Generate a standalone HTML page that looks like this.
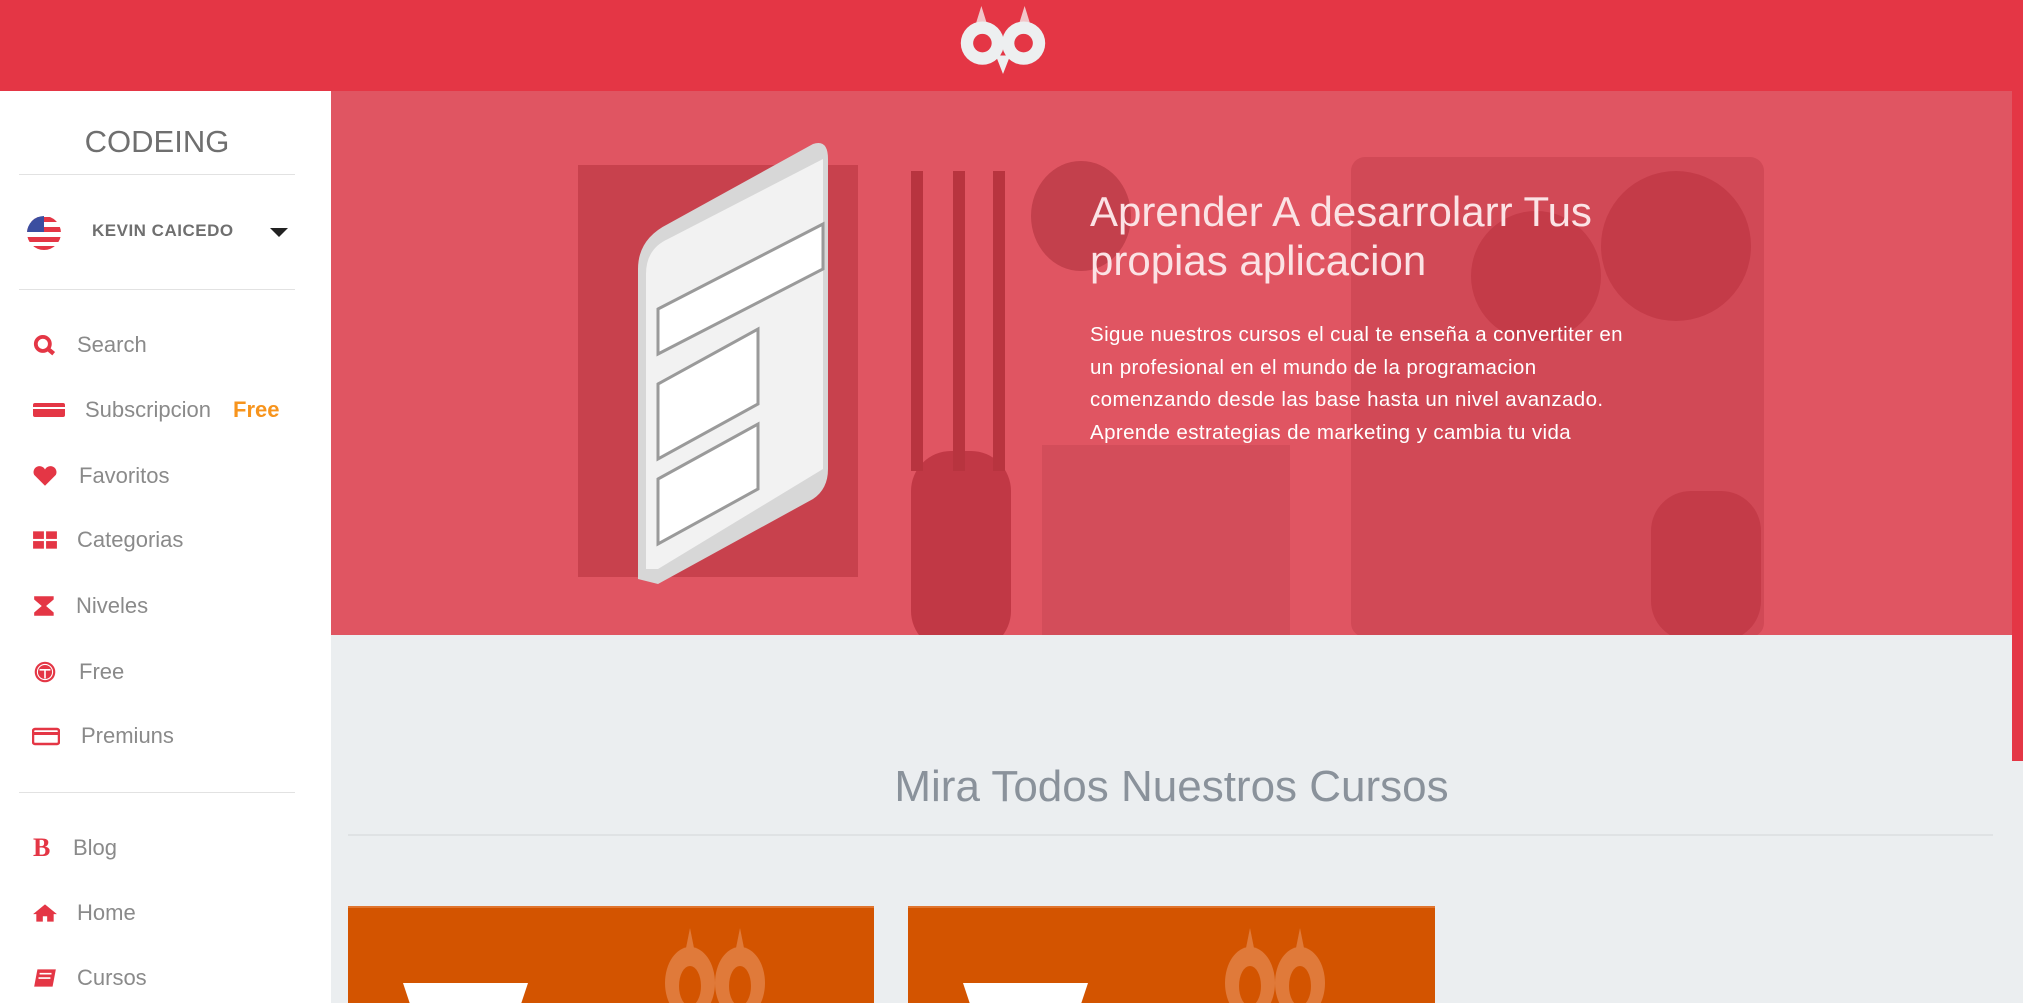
<!DOCTYPE html>
<html><head><meta charset="utf-8"><style>
*{margin:0;padding:0;box-sizing:border-box}
body{width:2023px;height:1003px;overflow:hidden;background:#ebeef0;font-family:"Liberation Sans",sans-serif;position:relative}
.top{position:absolute;left:0;top:0;width:2023px;height:91px;background:#e43645}
.side{position:absolute;left:0;top:91px;width:331px;height:912px;background:#fff}
.brand{position:absolute;left:0;width:314px;top:124px;text-align:center;font-size:31px;color:#6f6f6f}
.hr{position:absolute;left:19px;width:276px;height:1px;background:#e2e2e2}
.item{position:absolute;left:0;font-size:22px;color:#8a8a8a;height:30px;line-height:30px}
.ic{position:absolute;left:32px;top:4px;width:26px;height:22px}
.hero{position:absolute;left:331px;top:91px;width:1681px;height:544px;background:#e05562;overflow:hidden}
.d{position:absolute;background:#cc414e}
.strip{position:absolute;left:2012px;top:91px;width:11px;height:670px;background:#e43645}
.card{position:absolute;top:906px;height:97px;background:#d35400;border-top:2px solid #e0752f;overflow:hidden}
</style></head><body>
<div class="top"></div>
<svg style="position:absolute;left:958px;top:4px" width="90" height="70" viewBox="0 0 86 68">
<polygon points="22,2 27,18 17,18" fill="#f1c6c9"/><polygon points="64,2 69,18 59,18" fill="#f1c6c9"/>
<circle cx="23" cy="38" r="21" fill="#edeff0"/><circle cx="63" cy="38" r="21" fill="#edeff0"/>
<polygon points="36,50 50,50 43,68" fill="#edeff0"/>
<circle cx="23" cy="38" r="9" fill="#e43645"/><circle cx="63" cy="38" r="9" fill="#e43645"/>
</svg>
<div class="side">
<div class="brand" style="top:33px">CODEING</div>
<div class="hr" style="top:83px"></div>
<svg style="position:absolute;left:26px;top:124px" width="36" height="36" viewBox="0 0 36 36"><clipPath id="c"><circle cx="18" cy="18" r="17"/></clipPath><g clip-path="url(#c)"><rect width="36" height="36" fill="#fff"/><rect y="2" width="36" height="5" fill="#e43645"/><rect y="12" width="36" height="5" fill="#e43645"/><rect y="22" width="36" height="5" fill="#e43645"/><rect y="31" width="36" height="5" fill="#e43645"/><rect width="18" height="17" fill="#3b4ea0"/></g></svg>
<div style="position:absolute;left:92px;top:130px;font-size:17px;font-weight:bold;color:#6f6f6f;letter-spacing:0.5px">KEVIN CAICEDO</div>
<div style="position:absolute;left:270px;top:137px;border-left:9px solid transparent;border-right:9px solid transparent;border-top:9px solid #222"></div>
<div class="hr" style="top:198px"></div>
<div class="item" style="top:239px"><svg class="ic" viewBox="0 0 24 20"><circle cx="10" cy="9" r="6.5" fill="none" stroke="#e43645" stroke-width="3.5"/><line x1="14" y1="13" x2="20" y2="18" stroke="#e43645" stroke-width="4"/></svg><span style="position:absolute;left:77px">Search</span></div>
<div class="item" style="top:304px"><svg class="ic" viewBox="0 0 32 20" style="width:32px;left:33px"><rect x="0" y="3" width="32" height="14" rx="2" fill="#e43645"/><rect x="0" y="7" width="32" height="2" fill="#fff"/></svg><span style="position:absolute;left:85px">Subscripcion</span><span style="position:absolute;left:233px;color:#f7941d;font-weight:bold">Free</span></div>
<div class="item" style="top:370px"><svg class="ic" viewBox="0 0 24 20"><path d="M12 19 L2 9 A5 5 0 0 1 12 4 A5 5 0 0 1 22 9 Z" fill="#e43645"/></svg><span style="position:absolute;left:79px">Favoritos</span></div>
<div class="item" style="top:434px"><svg class="ic" viewBox="0 0 24 20"><rect x="1" y="2" width="10" height="7" fill="#e43645"/><rect x="13" y="2" width="10" height="7" fill="#e43645"/><rect x="1" y="11" width="10" height="7" fill="#e43645"/><rect x="13" y="11" width="10" height="7" fill="#e43645"/></svg><span style="position:absolute;left:77px">Categorias</span></div>
<div class="item" style="top:500px"><svg class="ic" viewBox="0 0 24 20"><path d="M2 1H20V4L13 10L20 16V19H2V16L9 10L2 4Z" fill="#e43645"/></svg><span style="position:absolute;left:76px">Niveles</span></div>
<div class="item" style="top:566px"><svg class="ic" viewBox="0 0 24 20"><circle cx="12" cy="10" r="9.5" fill="#e43645"/><circle cx="12" cy="10" r="7" fill="none" stroke="#fff" stroke-width="1"/><path d="M7 8H17M12 8V16" stroke="#fff" stroke-width="1.5"/></svg><span style="position:absolute;left:79px">Free</span></div>
<div class="item" style="top:630px"><svg class="ic" viewBox="0 0 28 20" style="width:28px"><rect x="1" y="3" width="26" height="15" rx="2" fill="none" stroke="#e43645" stroke-width="2.5"/><rect x="1" y="6" width="26" height="3" fill="#e43645"/></svg><span style="position:absolute;left:81px">Premiuns</span></div>
<div class="hr" style="top:701px"></div>
<div class="item" style="top:742px"><span style="position:absolute;left:33px;color:#e43645;font-family:'Liberation Serif',serif;font-weight:bold;font-size:26px">B</span><span style="position:absolute;left:73px">Blog</span></div>
<div class="item" style="top:807px"><svg class="ic" viewBox="0 0 24 20"><path d="M12 2L1 11H4V18H10V13H14V18H20V11H23Z" fill="#e43645"/></svg><span style="position:absolute;left:77px">Home</span></div>
<div class="item" style="top:872px"><svg class="ic" viewBox="0 0 24 20"><path d="M5 2H22L19 18H2Z" fill="#e43645"/><path d="M7 6H18M6 10H17" stroke="#fff" stroke-width="1.5"/></svg><span style="position:absolute;left:77px">Cursos</span></div>
</div>
<div class="hero">
<div class="d" style="left:247px;top:74px;width:280px;height:412px;background:#c8414d"></div>
<div class="d" style="left:1020px;top:66px;width:413px;height:480px;background:#d14956;border-radius:14px"></div>
<div class="d" style="left:711px;top:354px;width:248px;height:200px;background:#d34d5a"></div>
<div class="d" style="left:580px;top:360px;width:100px;height:200px;background:#c13845;border-radius:40px"></div>
<div class="d" style="left:700px;top:70px;width:100px;height:110px;background:#c3404c;border-radius:50%"></div>
<div class="d" style="left:1270px;top:80px;width:150px;height:150px;background:#c43b48;border-radius:50%"></div>
<div class="d" style="left:1140px;top:120px;width:130px;height:130px;background:#c43b48;border-radius:50%"></div>
<div class="d" style="left:1320px;top:400px;width:110px;height:150px;background:#c43b48;border-radius:40px"></div>
<div class="d" style="left:580px;top:80px;width:12px;height:300px;background:#b8343f"></div>
<div class="d" style="left:622px;top:80px;width:12px;height:300px;background:#b8343f"></div>
<div class="d" style="left:662px;top:80px;width:12px;height:300px;background:#b8343f"></div>
<svg style="position:absolute;left:297px;top:48px" width="210" height="450" viewBox="0 0 210 450">
<path d="M10 440 L10 130 Q10 100 40 85 L185 5 Q200 0 200 20 L200 330 Q200 350 185 360 L30 445 Z" fill="#d7d7d7"/>
<path d="M18 430 L18 135 Q18 110 40 100 L195 20 L195 330 L30 430Z" fill="#f2f2f2"/>
<path d="M30 170 L195 85 V130 L30 215Z M30 245 L130 190 V265 L30 320Z M30 340 L130 285 V350 L30 405Z" fill="#fff" stroke="#9a9a9a" stroke-width="3"/>
</svg>
<div style="position:absolute;left:759px;top:96px;font-size:42px;color:#fbe3e5;line-height:49px">Aprender A desarrolarr Tus<br>propias aplicacion</div>
<div style="position:absolute;left:759px;top:228px;font-size:20.5px;letter-spacing:0.4px;color:#fff;line-height:32.5px">Sigue nuestros cursos el cual te enseña a convertiter en<br>un profesional en el mundo de la programacion<br>comenzando desde las base hasta un nivel avanzado.<br>Aprende estrategias de marketing y cambia tu vida</div>
</div>
<div class="strip"></div>
<div style="position:absolute;left:331px;width:1681px;top:762px;text-align:center;font-size:44px;color:#8a929b">Mira Todos Nuestros Cursos</div>
<div style="position:absolute;left:348px;top:834px;width:1645px;height:2px;background:#dfe2e4"></div>
<div class="card" style="left:348px;width:526px"><svg style="position:absolute;left:312px;top:20px" width="110" height="80" viewBox="0 0 110 80"><polygon points="30,0 34,20 26,20" fill="#e07a3a"/><polygon points="80,0 84,20 76,20" fill="#e07a3a"/><ellipse cx="30" cy="55" rx="25" ry="36" fill="#e07a3a"/><ellipse cx="80" cy="55" rx="25" ry="36" fill="#e07a3a"/><ellipse cx="30" cy="58" rx="11" ry="20" fill="#d35400"/><ellipse cx="80" cy="58" rx="11" ry="20" fill="#d35400"/></svg><polygon/><div style="position:absolute;left:55px;top:75px;width:125px;height:30px;background:#fff;clip-path:polygon(0 0,100% 0,92% 100%,8% 100%)"></div></div>
<div class="card" style="left:908px;width:527px"><svg style="position:absolute;left:312px;top:20px" width="110" height="80" viewBox="0 0 110 80"><polygon points="30,0 34,20 26,20" fill="#e07a3a"/><polygon points="80,0 84,20 76,20" fill="#e07a3a"/><ellipse cx="30" cy="55" rx="25" ry="36" fill="#e07a3a"/><ellipse cx="80" cy="55" rx="25" ry="36" fill="#e07a3a"/><ellipse cx="30" cy="58" rx="11" ry="20" fill="#d35400"/><ellipse cx="80" cy="58" rx="11" ry="20" fill="#d35400"/></svg><div style="position:absolute;left:55px;top:75px;width:125px;height:30px;background:#fff;clip-path:polygon(0 0,100% 0,92% 100%,8% 100%)"></div></div>
</body></html>
